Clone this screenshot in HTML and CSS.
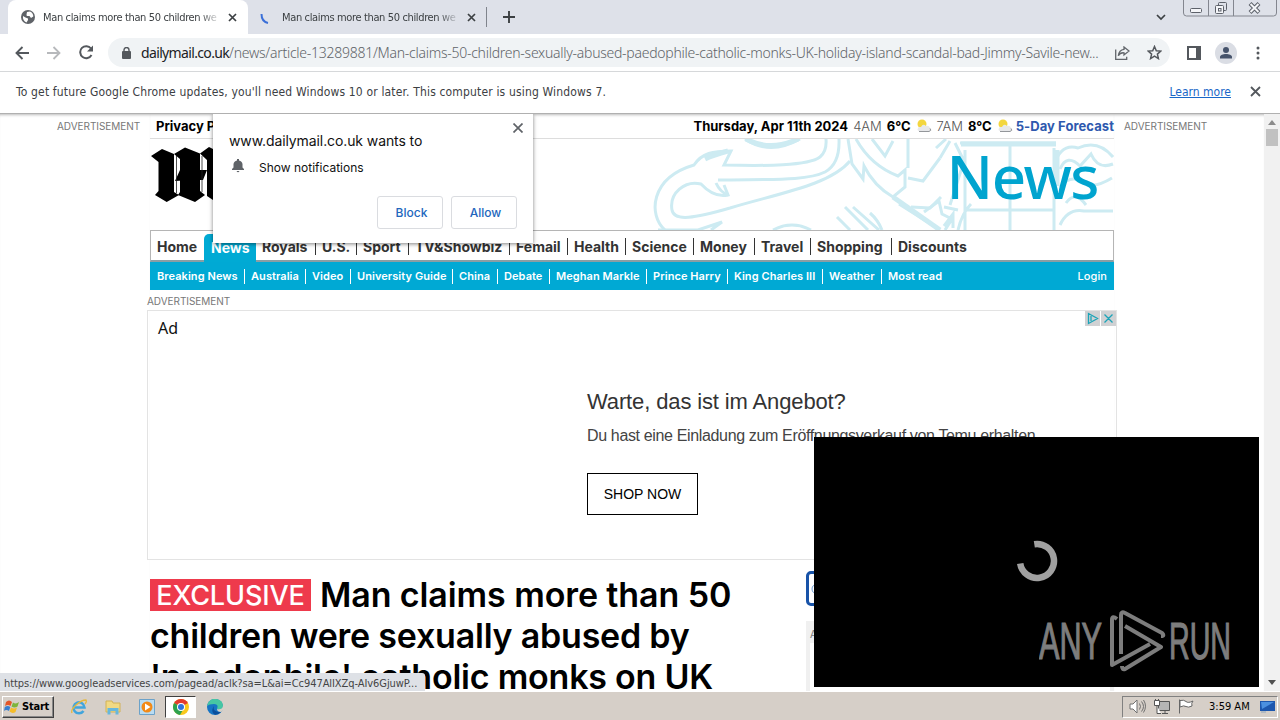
FILE: index.html
```html
<!DOCTYPE html>
<html lang="en">
<head>
    <meta charset="UTF-8">
    <title>Man claims more than 50 children were sexually abused</title>
    <link rel="stylesheet" href="styles.css">
</head>
<body>
    <div class="tabstrip">
        <div class="tab active">
            <svg class="globe" width="14" height="14" viewBox="0 0 14 14"><circle cx="7" cy="7" r="7" fill="#5f6368"/><path d="M2 6l2.500 1.500 2.500 1v1.500l-1.500 2.500C3 11.500 1.500 9 2 6zM6 2l3-.5c2 .8 3.500 3 3.300 5L10 8 8.500 6H5.800L5.500 4.500z" fill="#fff"/></svg>
            <span class="tab-title t1">Man claims more than 50 children we</span>
            <svg width="9" height="9" viewBox="0 0 9 9"><path d="M1 1l7 7M8 1l-7 7" stroke="#3c4043" stroke-width="1.700"/></svg>
        </div>
        <div class="tab second">
            <svg class="loading" width="12" height="14" viewBox="0 0 12 14"><path d="M1.500 4C1.500 8.500 3.500 12 8 13" stroke="#3a6fd8" stroke-width="2" fill="none"/></svg>
            <span class="tab-title t2">Man claims more than 50 children we</span>
            <svg width="9" height="9" viewBox="0 0 9 9"><path d="M1 1l7 7M8 1l-7 7" stroke="#3c4043" stroke-width="1.700"/></svg>
        </div>
        <svg class="newtab" width="12" height="12" viewBox="0 0 12 12"><path d="M6 0v12M0 6h12" stroke="#3c4043" stroke-width="1.900"/></svg>
        <svg class="tabsearch" width="10" height="7" viewBox="0 0 10 7"><path d="M1 1l4 4 4-4" stroke="#3c4043" stroke-width="1.700" fill="none"/></svg>
        <svg class="wincontrols" width="94" height="17" viewBox="0 0 94 17" fill="none" stroke="#83868f">
            <path d="M.5 0v13q0 3 3 3h87q3 0 3-3V0M25.500 0v16M50.500 0v16"/>
            <g stroke="#5d616a"><rect x="7.500" y="8.500" width="11" height="4" rx="1" fill="#f4f5f8"/><rect x="35.500" y="2.500" width="8" height="8" rx="1"/><rect x="32.500" y="5.500" width="8" height="8" rx="1" fill="#f4f5f8"/><rect x="35.500" y="8.500" width="2.500" height="2.500"/></g>
            <path d="M67 3.500l9 9M76 3.500l-9 9" stroke="#5d616a" stroke-width="4"/><path d="M67.500 4l8 8M75.500 4l-8 8" stroke="#f4f5f8" stroke-width="2"/>
        </svg>
    </div>

    <div class="toolbar">
        <svg class="back" width="14" height="14" viewBox="0 0 14 14"><path d="M14 7H1.500M7.500 1L1.500 7l6 6" stroke="#54585d" stroke-width="1.900" fill="none"/></svg>
        <svg class="forward" width="14" height="14" viewBox="0 0 14 14"><path d="M0 7h12.500M6.500 1l6 6-6 6" stroke="#b7b9bc" stroke-width="1.800" fill="none"/></svg>
        <svg class="reload" width="15" height="15" viewBox="0 0 15 15"><path d="M12.500 10A6 6 0 1 1 12 3.500" stroke="#54585d" stroke-width="2" fill="none"/><path d="M14 .5v6H8z" fill="#54585d"/></svg>
        <div class="omnibox">
            <svg width="9" height="12" viewBox="0 0 9 12"><rect y="4" width="9" height="8" rx="1" fill="#54585d"/><path d="M2 5V3a2.500 2.500 0 0 1 5 0v2" stroke="#54585d" stroke-width="1.400" fill="none"/></svg>
            <span class="url"><b>dailymail.co.uk</b>/news/article-13289881/Man-claims-50-children-sexually-abused-paedophile-catholic-monks-UK-holiday-island-scandal-bad-Jimmy-Savile-new...</span>
            <svg class="share" width="15" height="14" viewBox="0 0 15 14" fill="none" stroke="#62666b" stroke-width="1.300"><path d="M.7 3.500v9.800h11v-2.500"/><path d="M9 1l5 4-5 4V6.800C6.500 6.500 4.500 7.500 3.300 9.800 3.800 6 5.800 3.600 9 3.300z"/></svg>
            <svg class="star" width="15" height="15" viewBox="0 0 15 15"><path d="M7.500 1.500l1.800 4.200 4.500.4-3.400 3 1 4.500-3.900-2.400-3.900 2.400 1-4.500-3.400-3 4.500-.4z" fill="none" stroke="#54585d" stroke-width="1.500"/></svg>
        </div>
        <svg class="panel" width="14" height="14" viewBox="0 0 14 14"><rect x="1" y="1" width="12" height="12" fill="none" stroke="#54585d" stroke-width="2"/><path d="M9 0h5v14H9z" fill="#54585d"/></svg>
        <svg class="avatar" width="22" height="22" viewBox="0 0 22 22"><circle cx="11" cy="11" r="11" fill="#dadde4"/><circle cx="11" cy="8" r="3" fill="#46536b"/><path d="M5 16.500v-1.500c0-4 12-4 12 0v1.500z" fill="#46536b"/></svg>
        <svg class="menu" width="4" height="14" viewBox="0 0 4 14" fill="#54585d"><circle cx="2" cy="2" r="1.500"/><circle cx="2" cy="7" r="1.500"/><circle cx="2" cy="12" r="1.500"/></svg>
    </div>

    <div class="infobar">
        <span class="info-text">To get future Google Chrome updates, you'll need Windows 10 or later. This computer is using Windows 7.</span>
        <a class="learn">Learn more</a>
        <svg width="11" height="11" viewBox="0 0 11 11"><path d="M1 1l9 9M10 1l-9 9" stroke="#54585d" stroke-width="1.800"/></svg>
    </div>

    <div class="page">
        <div class="rail left"><span class="advert">ADVERTISEMENT</span></div>
        <div class="main">
            <div class="topline">
                <b class="privacy">Privacy P</b>
                <div class="weather">
                    <b class="date">Thursday, Apr 11th 2024</b>
                    <span>4AM</span><b>6°C</b>
                    <svg width="16" height="14" viewBox="0 0 16 14"><circle cx="6" cy="5" r="4.500" fill="#f3d63f"/><path d="M3 12q-3-1 0-4 1 0 2 0 2-4 5-1 3-1 4 2 3 2-1 4z" fill="#e7e8ea"/><path d="M3 12.500h10q3-1 1-3" stroke="#94979b" fill="none"/></svg>
                    <span>7AM</span><b>8°C</b>
                    <svg width="16" height="14" viewBox="0 0 16 14"><circle cx="6" cy="5" r="4.500" fill="#f3d63f"/><path d="M3 12q-3-1 0-4 1 0 2 0 2-4 5-1 3-1 4 2 3 2-1 4z" fill="#e7e8ea"/><path d="M3 12.500h10q3-1 1-3" stroke="#94979b" fill="none"/></svg>
                    <b class="forecast">5-Day Forecast</b>
                </div>
            </div>
            <div class="masthead">
                <svg class="logo" width="80" height="60" viewBox="0 0 80 60">
                    <path d="M0 9L11 2l12 5v38l5 3-12.300 7L4 48l3.500-4V15z"/>
                    <path d="M23 7L34 .5l15 6V44l5 4-10 7-17-7 2-3V12z"/>
                    <path d="M49 6.500L58 0l16 8v44l-9 3-9-6V13z"/>
                    <path d="M24 34l5-11h27l-4 10H40z"/>
                    <path d="M25.500 9v37M51 9v36" stroke="#222" stroke-width=".8"/>
                </svg>
                <svg class="crest" width="464" height="91" viewBox="650 139 464 91" fill="none" stroke="#cdebf2" stroke-width="3">
                    <path d="M665 230C648 215 650 178 694 165C702 153 713 151 731 151L724 165C765 166 808 166 820 157Q827 151 826 139"/>
                    <path d="M718 180C770 179 807 181 825 172Q840 164 839 139M730 208C695 218 674 222 672 210C669 193 685 180 701 184Q714 198 728 195L724 185M730 208C780 193 830 185 850 161M745 139Q770 156 800 139"/>
                    <path d="M705 159Q713 155 728 151M746 139Q770 152 798 139" stroke-width="5"/>
                    <path d="M716 183Q720 192 728 195"/>
                    <path d="M848 139L852 164L863 179L864 166Q874 186 893 197L905 187V170L898 176C880 169 866 157 856 139M872 139L885 156L893 141M908 139V168M899 204L918 216L940 230M908 178L923 181L940 158M911 207L930 208L941 197M837 217L850 230M845 207L868 230M853 207L879 230M870 213Q878 220 882 230M773 230Q792 220 811 230M658 230H698L722 222L711 230"/>
                    <path d="M893 197L940 230" stroke-width="5"/>
                    <path d="M936 148L946 139M940 158L950 141M950 205L964 161L955 143M960 143H1056M965 150V230M1010 143V230M965 210H1054M1054 148V230M958 230Q962 213 971 204M1054 165Q1061 143 1078 148Q1098 139 1113 157M1060 169Q1067 153 1080 166L1091 154Q1098 170 1113 164M1060 187Q1070 174 1084 182Q1092 190 1112 178M1060 225Q1068 208 1084 211H1113M1066 203Q1075 190 1086 205"/>
                    <path d="M961 144H1056M1057 150V186" stroke-width="5"/>
                    <path d="M924 212l15-11 3 13 10 5-7 11M944 207l14 3M944 226l9-12v14"/>
                </svg>
                <span class="channel">News</span>
            </div>
            <div class="nav"><b>Home</b><b class="current">News</b><b>Royals</b><b>U.S.</b><b>Sport</b><b>TV&amp;Showbiz</b><b>Femail</b><b>Health</b><b>Science</b><b>Money</b><b>Travel</b><b>Shopping</b><b>Discounts</b></div>
            <div class="subnav"><span>Breaking News</span><span>Australia</span><span>Video</span><span>University Guide</span><span>China</span><span>Debate</span><span>Meghan Markle</span><span>Prince Harry</span><span>King Charles III</span><span>Weather</span><span>Most read</span><span class="login">Login</span></div>
            <div class="advert below">ADVERTISEMENT</div>
            <div class="ad">
                <div class="ad-head">
                    <span>Ad</span>
                    <svg width="31" height="15" viewBox="0 0 31 15"><path d="M0 0h15v15H0zM16 0h15v15H16z" fill="#d0d1d3"/><path d="M3.500 2.500v10l9-5zM6 5v5M19.500 3.500l8 8M27.500 3.500l-8 8" stroke="#1ba4b8" stroke-width="1.300" fill="none"/></svg>
                </div>
                <div class="ad-copy">
                    <div class="ad-title">Warte, das ist im Angebot?</div>
                    <div class="ad-text">Du hast eine Einladung zum Eröffnungsverkauf von Temu erhalten</div>
                    <div class="shop">SHOP NOW</div>
                </div>
            </div>
            <div class="story">
                <div class="headline">
                    <div class="l1"><span class="exclusive">EXCLUSIVE</span><span>Man claims more than 50</span></div>
                    <div class="l2">children were sexually abused by</div>
                    <div class="l3">'paedophile' catholic monks on UK</div>
                </div>
                <div class="side">
                    <div class="search"><svg width="12" height="12" viewBox="0 0 12 12"><circle cx="6" cy="6" r="5" fill="none" stroke="#6b9ad0"/></svg></div>
                    <div class="sidead"><span>A</span></div>
                </div>
            </div>
        </div>
        <div class="rail right"><span class="advert">ADVERTISEMENT</span></div>
        <div class="scrollbar">
            <svg width="8" height="5" viewBox="0 0 8 5"><path d="M0 5l4-5 4 5z" fill="#8b8b8b"/></svg>
            <div class="thumb"></div>
            <svg class="down" width="8" height="5" viewBox="0 0 8 5"><path d="M0 0l4 5 4-5z" fill="#505050"/></svg>
        </div>

        <div class="permission">
            <div class="perm-top"><span>www.dailymail.co.uk wants to</span>
                <svg width="10" height="10" viewBox="0 0 10 10"><path d="M.5.5l9 9M9.500.5l-9 9" stroke="#5f6368" stroke-width="1.700"/></svg>
            </div>
            <div class="perm-row">
                <svg width="12" height="14" viewBox="0 0 12 14"><path d="M0 11V10l1.500-1.500V5Q2 2 5 1.500V0h2v1.500Q10 2 10.500 5v3.500L12 10v1zM4.500 12h3q-1.500 2.500-3 0z" fill="#5f6368"/></svg>
                <span>Show notifications</span>
            </div>
            <div class="perm-buttons"><span>Block</span><span>Allow</span></div>
        </div>

        <div class="video">
            <svg class="spinner" width="42" height="42" viewBox="0 0 42 42"><path d="M18.300 4.200A17 17 0 1 1 4.200 23.600" fill="none" stroke="#a0a0a0" stroke-width="6.500"/></svg>
            <svg class="watermark" width="194" height="64" viewBox="0 0 194 64" fill="#7d7d7d" stroke="#7d7d7d" stroke-width="1.200">
                <text x="0" y="48.500" font-size="51" textLength="63" lengthAdjust="spacingAndGlyphs">ANY</text>
                <text x="130" y="48.500" font-size="51" textLength="62" lengthAdjust="spacingAndGlyphs">RUN</text>
                <g fill="none" stroke="#7d7d7d" stroke-width="4" stroke-linejoin="round"><path d="M78 9q-5-4-5 1v45l38-21M122 26q4 0 1-3L86 3q-4-2-4 2v39M86 16l36 21L86 59q-3 1-3-3"/></g>
            </svg>
        </div>
        <div class="status"><span>https://www.googleadservices.com/pagead/aclk?sa=L&amp;ai=Cc947AlIXZq-AIv6GjuwP...</span></div>
    </div>

    <div class="taskbar">
        <div class="start">
            <svg width="16" height="15" viewBox="0 0 16 15"><path d="M2 3q3-3 6 0L6.500 7Q4 5 1 7z" fill="#e4572a"/><path d="M9 3.500q3 2 6-.5l-1.500 4.500q-3 2-6 0z" fill="#7db53c"/><path d="M.8 8q3-2 5.500 0L5 12q-3-2-5 0z" fill="#3a7fd0"/><path d="M7 8.500q3 2 6 0L11.500 13q-3 2-6-.5z" fill="#f5bd2a"/></svg>
            <b>Start</b>
        </div>
        <svg class="app ie" width="16" height="16" viewBox="0 0 16 16"><path d="M4 8.500h9.500A5.500 5.500 0 1 0 12.500 12" fill="none" stroke="#41a5dc" stroke-width="2.500"/><path d="M1 14C-1 10 9 1 15 1q1 2-1 4" fill="none" stroke="#e6b83c" stroke-width="1.300"/></svg>
        <svg class="app folder" width="16" height="16" viewBox="0 0 16 16"><path d="M1 2h6l1 2h7v9H1z" fill="#f1d983" stroke="#d2b257"/><path d="M2.500 15.500V9h11v6.500h-3V12h-5v3.500z" fill="#67b7dc"/></svg>
        <svg class="app player" width="16" height="16" viewBox="0 0 16 16"><path d="M.5.5h15v15H.5z" fill="#b9dcf2" stroke="#6ca2c9"/><circle cx="8" cy="8" r="5.500" fill="#f28a17"/><path d="M6 4.500v7L11.500 8z" fill="#fff"/></svg>
        <div class="task">
            <svg width="16" height="16" viewBox="0 0 16 16"><circle cx="8" cy="8" r="8" fill="#f9c81d"/><path d="M8 8L1.100 4A8 8 0 0 1 14.900 4z" fill="#e33b2e"/><path d="M8 8L1.100 4A8 8 0 0 0 7 16l4-7z" fill="#2ea24f"/><circle cx="8" cy="8" r="4" fill="#fff"/><circle cx="8" cy="8" r="3" fill="#2f73dc"/></svg>
        </div>
        <svg class="app edge" width="16" height="16" viewBox="0 0 16 16"><circle cx="8" cy="8" r="8" fill="#1674c4"/><path d="M0 7Q2-1 9 0q7 1 7 7 0 4-6 3 2-5-3-5T0 7z" fill="#46c6a3"/><path d="M7 7q-2 6 7 6-3 3-6 2.800Q3 13 7 7z" fill="#0b4f9c"/><path d="M10 10q5 1 6-3v4l-2 2q-4 0-4-3z" fill="#d5d1c8"/></svg>
        <div class="tray">
            <svg width="17" height="15" viewBox="0 0 17 15" fill="none" stroke="#707070"><path d="M1 5h3l4-4v13l-4-4H1z" fill="#fff"/><path d="M10.500 4.500q2 3 0 6M12.500 2.500q4 5 0 10M14.500 1q4 6 0 12.500"/></svg>
            <svg width="16" height="15" viewBox="0 0 16 15" stroke="#555"><path d="M4.500 2.500h11v9h-11z" fill="#b5b5b5"/><path d="M8 14.500h6M11 12v2M.5 1.500h5v5h-5zM3 6.500v8h4M1.500 0v2M4.500 0v2" fill="#fff"/></svg>
            <svg width="16" height="15" viewBox="0 0 16 15" stroke="#666" fill="#fff"><path d="M1.500.5v14M2 1.500q4-1 6 1t7-.5q-2 2-1 5-4 2-6 .5t-6 .5z"/></svg>
            <span class="clock">3:59 AM</span>
            <svg class="desk" width="15" height="12" viewBox="0 0 15 12"><path d="M0 0h15v10H0z" fill="#1d57ae"/><path d="M1 1h13L2 8z" fill="#4b90e0"/><path d="M1 11h5" stroke="#8fa5bb"/></svg>
        </div>
    </div>
</body>
</html>
```

FILE: styles.css
```css
body {
    margin: 0;
    width: 1280px;
    height: 720px;
    overflow: hidden;
    display: flex;
    flex-direction: column;
    background-color: #fff;
    font-family: "DejaVu Sans Condensed", "DejaVu Sans", sans-serif;
    color: #3c4043;
}

* {
    box-sizing: border-box;
}

svg {
    display: block;
    flex: none;
}

span, b, a {
    white-space: nowrap;
}

/* browser */
.tabstrip {
    height: 34px;
    background-color: #dee1e9;
    display: flex;
    align-items: center;
    flex: none;
}

.tab {
    height: 34px;
    display: flex;
    align-items: center;
    font-size: 11px;
}

.active {
    width: 240px;
    margin-left: 8px;
    padding-left: 13px;
    background-color: #fff;
    border-radius: 8px 8px 0 0;
}

.second {
    width: 239px;
    height: 20px;
    padding-left: 12px;
    border-right: 1px solid #80848c;
}

.tab-title {
    width: 178px;
    letter-spacing: -0.36px;
    -webkit-mask-image: linear-gradient(90deg, #000 88%, transparent);
    mask-image: linear-gradient(90deg, #000 88%, transparent);
}

.t1 {
    margin: 0 7px 0 8px;
}

.t2 {
    margin: 0 7px 0 10px;
}

.newtab {
    margin-left: 16px;
}

.tabsearch {
    margin-left: 641px;
}

.wincontrols {
    margin-left: 17px;
    align-self: flex-start;
}

.toolbar {
    height: 38px;
    flex: none;
    display: flex;
    align-items: center;
    border-bottom: 1px solid #d6d8da;
    padding-left: 15px;
}

.forward {
    margin-left: 18px;
}

.reload {
    margin-left: 18px;
}

.omnibox {
    width: 1062px;
    height: 29px;
    margin-left: 14px;
    border-radius: 15px;
    background-color: #f0f3f5;
    display: flex;
    align-items: center;
    padding-left: 14px;
}

.url {
    width: 960px;
    margin-left: 10px;
    font-family: "Noto Sans", sans-serif;
    font-weight: 300;
    font-size: 14px;
    letter-spacing: -0.26px;
    color: #5f6368;
}

.url b {
    font-weight: 400;
    letter-spacing: -0.65px;
    color: #202124;
}

.share {
    margin-left: 14px;
}

.star {
    margin-left: 17px;
}

.panel {
    margin-left: 17px;
}

.avatar {
    margin-left: 14px;
}

.menu {
    margin-left: 19px;
}

.infobar {
    height: 41px;
    flex: none;
    display: flex;
    align-items: center;
    justify-content: space-between;
    padding: 0 19px 2px 16px;
    font-size: 12px;
}

.info-text {
    flex: 1;
    letter-spacing: 0.16px;
}

.learn {
    margin-right: 19px;
    color: #1967c8;
    text-decoration: underline;
}

/* page */
.page {
    position: relative;
    height: 578px;
    flex: none;
    display: grid;
    grid-template-columns: 150px 964px 150px 16px;
    grid-template-rows: 577px;
    overflow: hidden;
    border-top: 1px solid #b0b0b0;
    font-family: Inter, sans-serif;
}

.advert {
    font-size: 10px;
    line-height: 12px;
    letter-spacing: -0.05px;
    color: #777;
}

.rail {
    padding-top: 6px;
    font-size: 10px;
    line-height: 12px;
    box-shadow: inset 0 3px 3px -2px #bbb;
}

.left {
    padding-left: 57px;
}

.right {
    padding-left: 10px;
}

.topline {
    height: 25px;
    display: flex;
    justify-content: space-between;
    align-items: center;
    border-bottom: 1px solid #ddd;
    padding-left: 6px;
    font-size: 13px;
    color: #000;
    box-shadow: inset 0 3px 3px -2px #bbb;
}

.weather {
    display: flex;
    align-items: center;
    gap: 5px;
}

.weather span {
    font-weight: 300;
    color: #555;
}

.weather .forecast {
    color: #2e59ae;
    margin-left: -2px;
    letter-spacing: 0.07px;
}

.masthead {
    height: 91px;
    display: flex;
    position: relative;
    overflow: hidden;
}

.logo {
    margin: 8px 0 0 1px;
}

.crest {
    margin-left: 419px;
}

/* section name lies over the crest */
.channel {
    position: absolute;
    right: 16px;
    top: -5px;
    font-family: "Noto Sans", sans-serif;
    font-weight: 500;
    font-size: 60px;
    line-height: 84px;
    letter-spacing: -1.5px;
    color: #00a4cf;
}

.nav {
    height: 32px;
    border: 1px solid #b5b5b5;
    border-bottom: 2px solid #8a9ea4;
    display: grid;
    grid-template-columns: 53px 52px 60px 41px 52px 101px 58px 58px 68px 61px 56px 81px 1fr;
    align-items: center;
    font-size: 14px;
    color: #333;
}

.nav b {
    margin-top: 1px;
    padding-left: 6px;
    line-height: 17px;
    border-right: 1px solid #333;
}

.nav b:first-child, .nav b:last-child {
    border: 0;
}

.nav .current {
    align-self: stretch;
    margin: 3px 0 -2px;
    padding: 5px 0 0 7px;
    background-color: #00aad4;
    color: #fff;
    border: 0;
    border-radius: 5px 5px 0 0;
}

.subnav {
    height: 28px;
    background-color: #00a9d4;
    display: grid;
    grid-template-columns: 95px 61px 45px 102px 45px 52px 97px 81px 95px 59px 1fr auto;
    align-items: center;
    font-size: 11px;
    font-weight: 600;
    letter-spacing: 0.07px;
    color: #fff;
}

.subnav span {
    padding-left: 6px;
    line-height: 15px;
    border-right: 1px solid #fff;
}

.subnav span:first-child {
    padding-left: 7px;
}

.subnav span:nth-last-child(-n+2) {
    border: 0;
}

.subnav .login {
    padding-right: 7px;
    font-weight: 500;
}

.below {
    margin: 5px 0 3px -3px;
}

.ad {
    width: 970px;
    height: 250px;
    margin-left: -3px;
    border: 1px solid #e3e3e3;
    color: #333;
    font-family: "Liberation Sans", sans-serif;
}

.ad-head {
    height: 34px;
    display: flex;
    justify-content: space-between;
    font-family: "Noto Sans", sans-serif;
    font-size: 16px;
    padding: 0 0 0 10px;
    line-height: 35px;
    color: #111;
}

.ad-copy {
    padding: 42px 0 0 439px;
}

.ad-title {
    font-size: 22px;
    line-height: 30px;
    letter-spacing: -0.13px;
}

.ad-text {
    margin-top: 8px;
    font-size: 16px;
    line-height: 22px;
    letter-spacing: -0.35px;
    color: #444;
    white-space: nowrap;
}

.shop {
    width: 111px;
    height: 42px;
    margin-top: 26px;
    border: 1px solid #000;
    text-align: center;
    font-size: 14px;
    line-height: 40px;
    color: #000;
}

.story {
    display: flex;
    justify-content: space-between;
}

.headline {
    padding-top: 14px;
    font-weight: 600;
    font-size: 34px;
    line-height: 41px;
    letter-spacing: -0.22px;
    color: #000;
    white-space: nowrap;
}

.l1 {
    display: flex;
    align-items: center;
    gap: 9px;
    letter-spacing: -0.1px;
}

.exclusive {
    width: 161px;
    height: 32px;
    background-color: #ee3a4c;
    color: #fff;
    font-weight: 500;
    font-size: 27px;
    line-height: 34px;
    text-align: center;
}

.side {
    width: 308px;
    padding-top: 11px;
}

.search {
    height: 35px;
    border: 3px solid #1853a8;
    border-radius: 5px;
    padding: 9px 2px;
}

.sidead {
    height: 80px;
    margin-top: 15px;
    border: 4px solid #f0f0f0;
    border-top: 22px solid #f0f0f0;
    font-size: 10px;
    color: #777;
}

.sidead span {
    display: block;
    margin: -15px 0 0;
}

.scrollbar {
    background-color: #f1f1f1;
    display: flex;
    flex-direction: column;
    align-items: center;
    padding: 6px 0;
}

.thumb {
    width: 12px;
    height: 17px;
    margin-top: 4px;
    background-color: #c1c1c1;
}

.down {
    margin-top: auto;
}

/* overlays */
.permission {
    position: absolute;
    left: 213px;
    top: 0;
    width: 320px;
    height: 129px;
    padding: 9px 16px 0;
    background-color: #fff;
    box-shadow: 0 1px 4px rgba(0, 0, 0, 0.5);
    color: #111;
    font-size: 12px;
}

.perm-top {
    display: flex;
    justify-content: space-between;
    font-size: 14px;
    line-height: 36px;
    letter-spacing: -0.1px;
}

.perm-top svg {
    margin-right: -6px;
}

.perm-row {
    display: flex;
    margin-left: 3px;
    gap: 15px;
    line-height: 17px;
}

.perm-buttons {
    display: flex;
    justify-content: flex-end;
    gap: 8px;
    margin-top: 20px;
}

.perm-buttons span {
    width: 66px;
    height: 33px;
    border: 1px solid #dadce0;
    border-radius: 3px;
    line-height: 31px;
    text-align: center;
    font-weight: 500;
    color: #2266bd;
    padding-left: 3px;
}

.video {
    position: absolute;
    left: 814px;
    top: 323px;
    width: 445px;
    height: 250px;
    background-color: #000;
    display: flex;
    flex-direction: column;
    font-family: "Liberation Sans Narrow", "Liberation Sans", sans-serif;
}

.spinner {
    margin: 103px 0 0 202px;
}

.watermark {
    margin: 28px 0 0 225px;
}

.status {
    position: absolute;
    left: 0;
    bottom: 0;
    width: 425px;
    height: 18px;
    padding-left: 4px;
    background-color: #dee1e6;
    border-radius: 0 3px 0 0;
    font-family: "DejaVu Sans Condensed", sans-serif;
    font-size: 11px;
    line-height: 21px;
    letter-spacing: -0.07px;
    color: #444;
}

/* taskbar */
.taskbar {
    height: 29px;
    flex: none;
    display: flex;
    align-items: center;
    padding: 1px 2px 0;
    border-top: 1px solid #fff;
    background-color: #d6cfc8;
}

.start {
    width: 52px;
    height: 22px;
    display: flex;
    align-items: center;
    gap: 2px;
    border: 1px solid;
    border-color: #fff #404040 #404040 #fff;
    box-shadow: inset -1px -1px #888;
    padding-left: 1px;
    font-size: 11px;
    letter-spacing: -0.2px;
    color: #000;
}

.ie {
    margin-left: 17px;
}

.folder {
    margin-left: 18px;
}

.player {
    margin-left: 18px;
}

.task {
    width: 31px;
    height: 22px;
    margin-left: 10px;
    padding: 2px 7px;
    background-color: #fff;
    border: 1px solid;
    border-color: #404040 #fff #fff #404040;
}

.edge {
    margin-left: 11px;
}

.tray {
    width: 156px;
    height: 22px;
    margin-left: auto;
    display: flex;
    align-items: center;
    gap: 8px;
    padding-left: 6px;
    border: 1px solid;
    border-color: #808080 #fff #fff #808080;
    font-size: 11px;
    color: #000;
}

.clock {
    width: 43px;
    margin-left: 7px;
}
```
